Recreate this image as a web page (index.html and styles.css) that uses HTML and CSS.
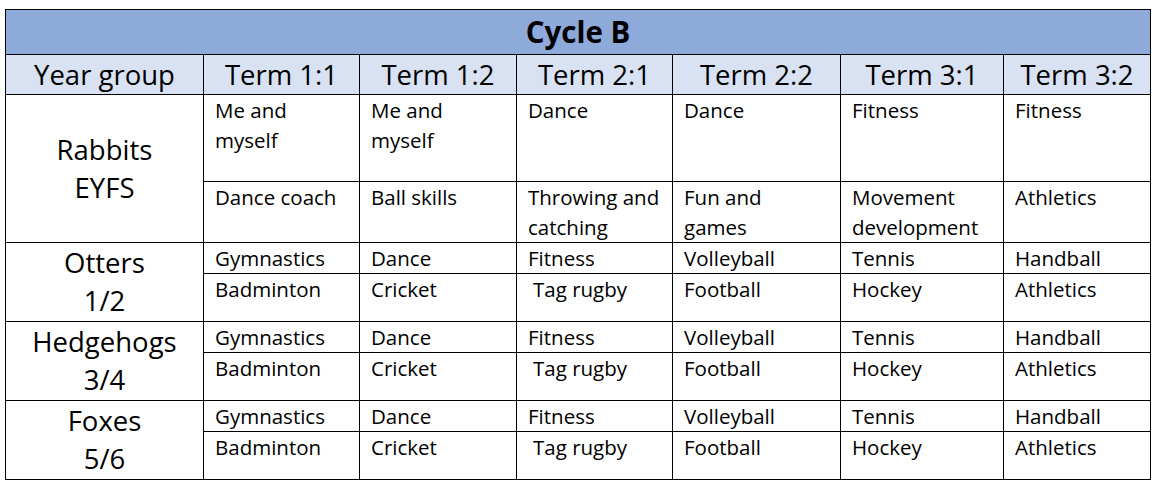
FILE: index.html
```html
<!DOCTYPE html>
<html>
<head>
<meta charset="utf-8">
<link rel="stylesheet" href="styles.css">
</head>
<body>
<table class="plan">
  <colgroup>
    <col class="c0"><col class="c1"><col class="c2"><col class="c3"><col class="c4"><col class="c5"><col class="c6">
  </colgroup>
  <tr class="title-row"><td colspan="7" class="title">Cycle B</td></tr>
  <tr class="head-row">
    <td>Year group</td><td>Term 1:1</td><td>Term 1:2</td><td>Term 2:1</td><td>Term 2:2</td><td>Term 3:1</td><td>Term 3:2</td>
  </tr>
  <tr class="r-a">
    <td rowspan="2" class="group">Rabbits<br>EYFS</td>
    <td>Me and<br>myself</td><td>Me and<br>myself</td><td>Dance</td><td>Dance</td><td>Fitness</td><td>Fitness</td>
  </tr>
  <tr class="r-b">
    <td>Dance coach</td><td>Ball skills</td><td>Throwing and<br>catching</td><td>Fun and<br>games</td><td>Movement<br>development</td><td>Athletics</td>
  </tr>
  <tr class="r-c">
    <td rowspan="2" class="group">Otters<br>1/2</td>
    <td>Gymnastics</td><td>Dance</td><td>Fitness</td><td>Volleyball</td><td>Tennis</td><td>Handball</td>
  </tr>
  <tr class="r-d">
    <td>Badminton</td><td>Cricket</td><td class="sp">Tag rugby</td><td>Football</td><td>Hockey</td><td>Athletics</td>
  </tr>
  <tr class="r-c">
    <td rowspan="2" class="group">Hedgehogs<br>3/4</td>
    <td>Gymnastics</td><td>Dance</td><td>Fitness</td><td>Volleyball</td><td>Tennis</td><td>Handball</td>
  </tr>
  <tr class="r-d">
    <td>Badminton</td><td>Cricket</td><td class="sp">Tag rugby</td><td>Football</td><td>Hockey</td><td>Athletics</td>
  </tr>
  <tr class="r-c">
    <td rowspan="2" class="group">Foxes<br>5/6</td>
    <td>Gymnastics</td><td>Dance</td><td>Fitness</td><td>Volleyball</td><td>Tennis</td><td>Handball</td>
  </tr>
  <tr class="r-d">
    <td>Badminton</td><td>Cricket</td><td class="sp">Tag rugby</td><td>Football</td><td>Hockey</td><td>Athletics</td>
  </tr>
</table>
</body>
</html>
```
FILE: styles.css
```css
html, body {
  margin: 0;
  padding: 0;
  background: #ffffff;
}
body {
  padding: 9px 0 0 5px;
  font-family: "Open Sans", Lato, "Liberation Sans", sans-serif;
  color: #000;
}
.plan {
  border-collapse: collapse;
  table-layout: fixed;
  width: 1145px;
}
.plan td {
  border: 1px solid #000;
  padding: 0 0 0 11px;
  vertical-align: top;
  font-size: 20.5px;
  line-height: 30px;
  overflow: hidden;
  white-space: nowrap;
}
.c0 { width: 198px; }
.c1 { width: 156px; }
.c2 { width: 157px; }
.c3 { width: 156px; }
.c4 { width: 168px; }
.c5 { width: 163px; }
.c6 { width: 147px; }

.title-row td {
  height: 44px;
}
.plan td.title {
  background: #8eaadb;
  text-align: center;
  vertical-align: middle;
  padding: 0;
  font-weight: bold;
  font-size: 29.5px;
  line-height: 44px;
}
.head-row td {
  height: 39px;
  background: #d9e2f3;
  text-align: center;
  vertical-align: middle;
  padding: 0;
  font-size: 27.5px;
  line-height: 39px;
}
.r-a td { height: 86px; }
.r-b td { height: 58px; }
.r-c td { height: 30px; }
.r-d td { height: 47px; }
.plan td.group {
  text-align: center;
  vertical-align: middle;
  padding: 0;
  font-size: 27.5px;
  line-height: 38px;
}
.plan td.sp {
  padding-left: 16px;
}
```
